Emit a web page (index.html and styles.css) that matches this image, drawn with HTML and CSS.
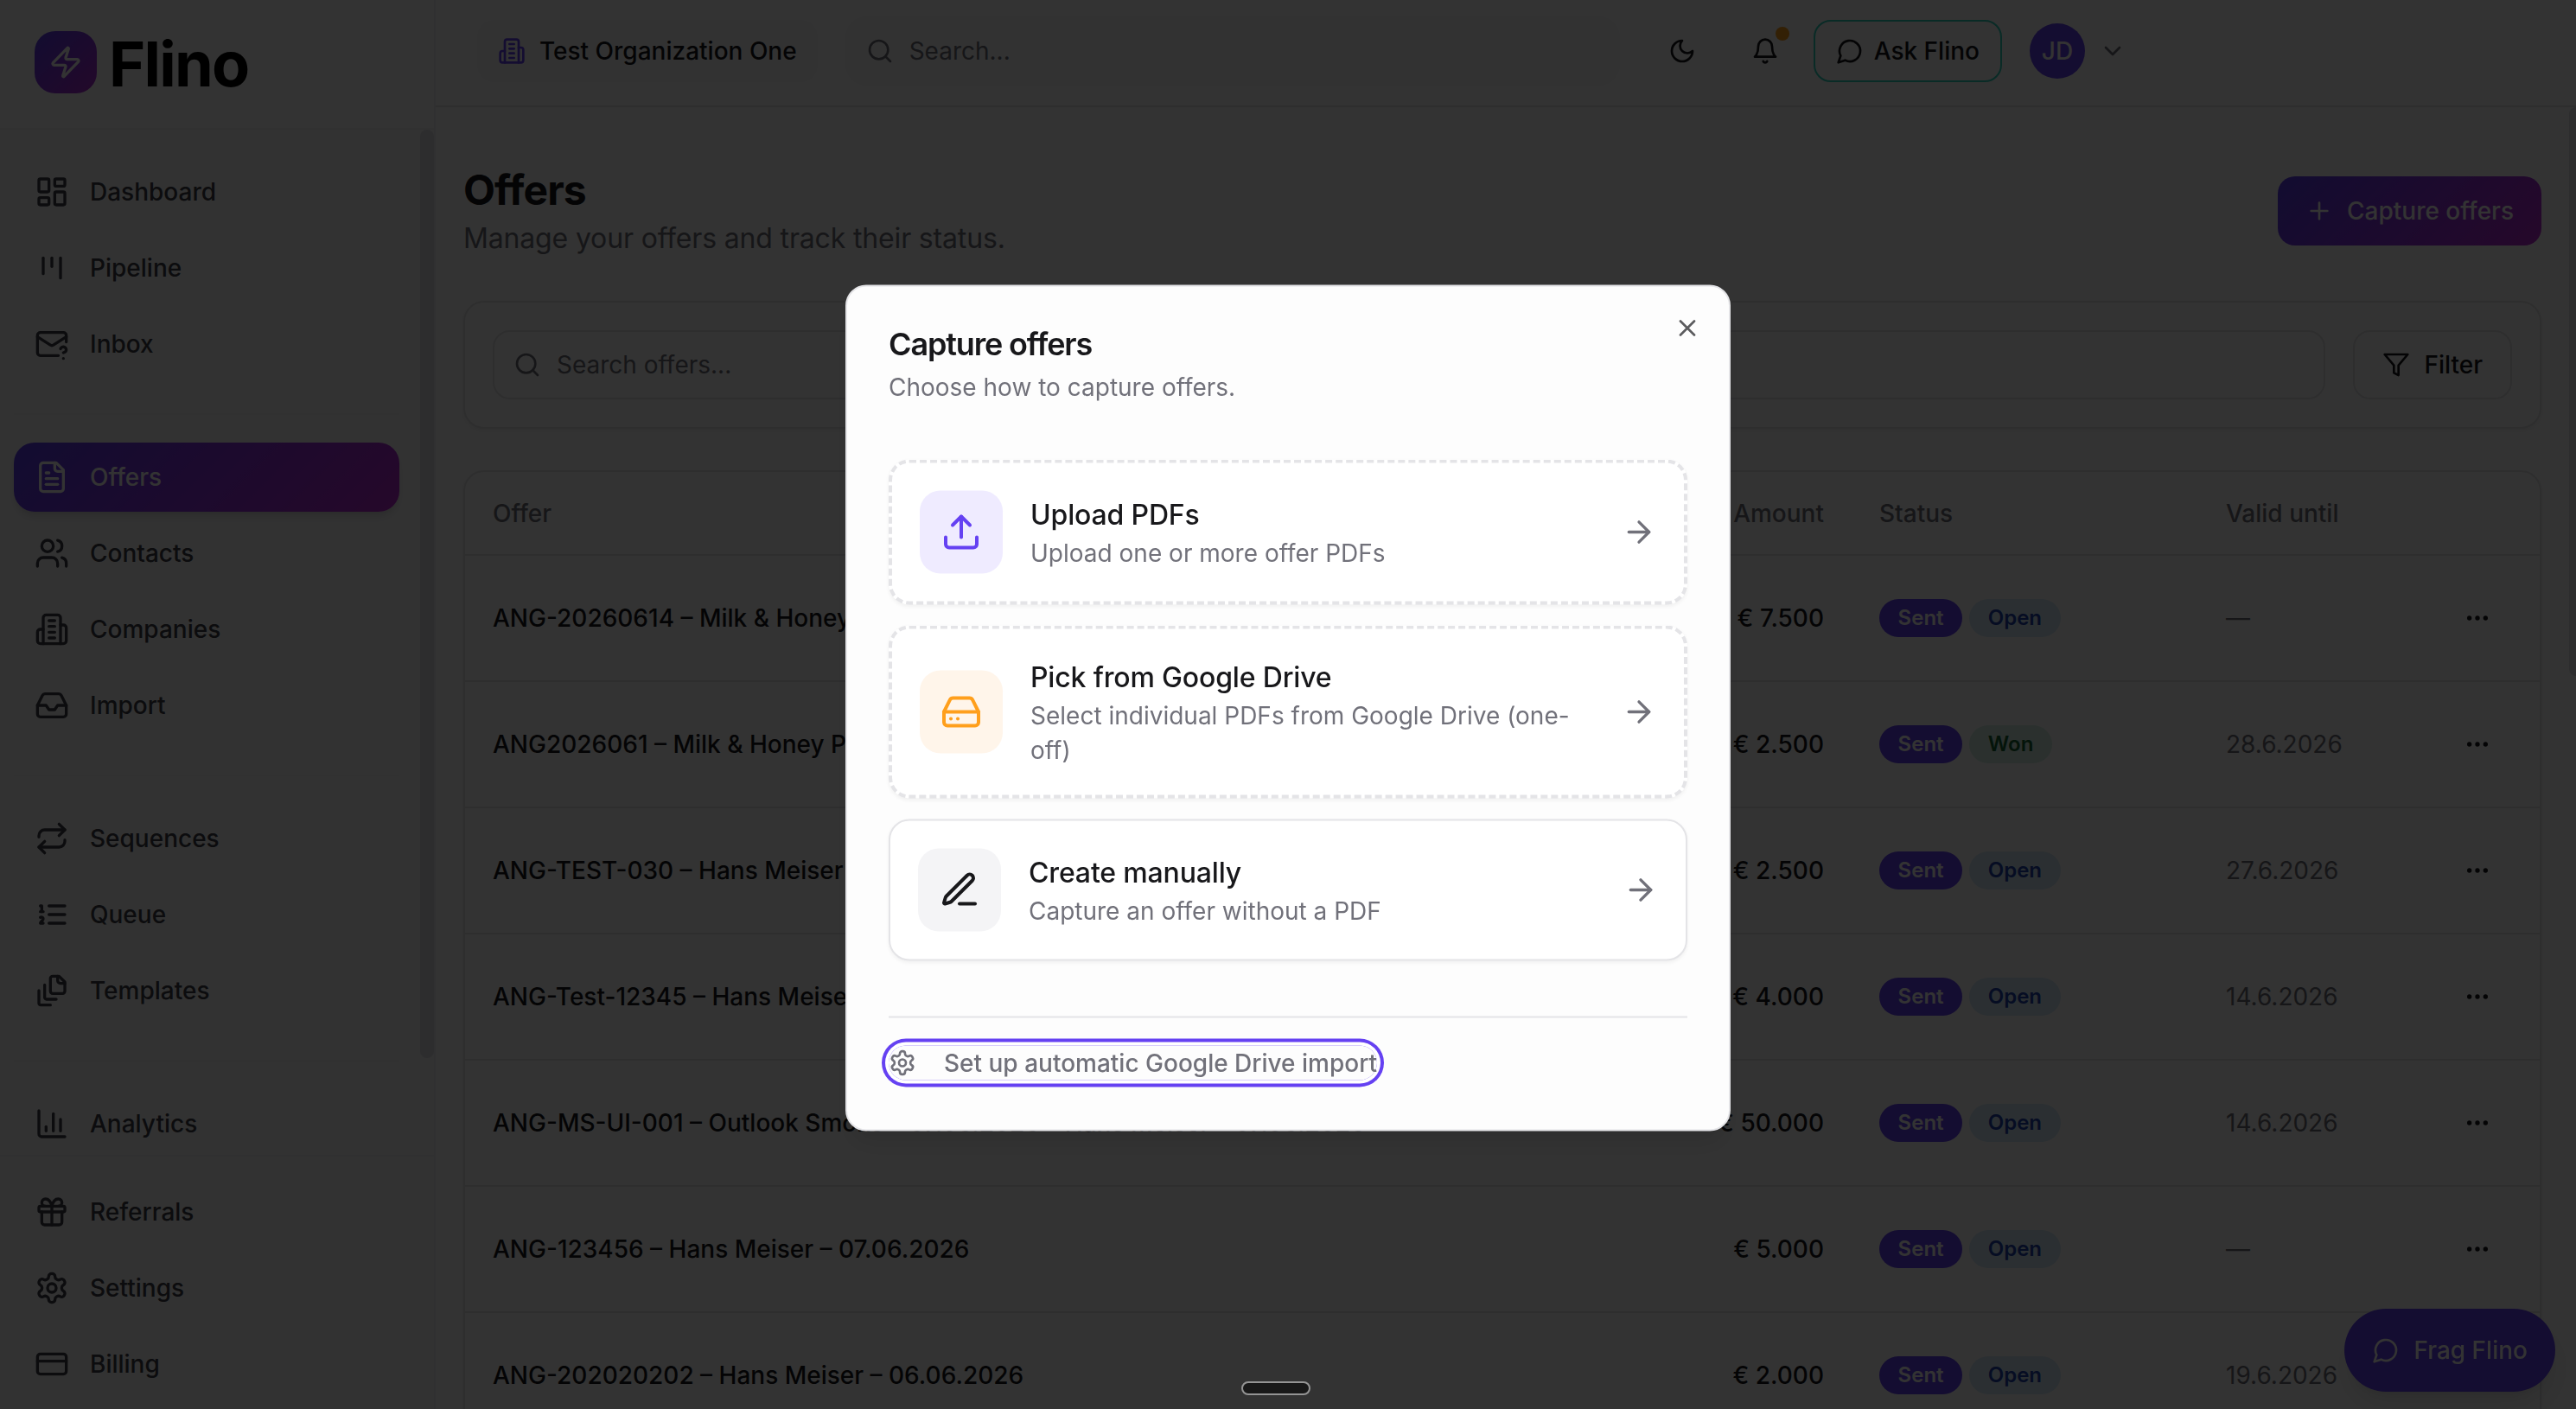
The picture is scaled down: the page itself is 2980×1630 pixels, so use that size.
FILE: index.html
```html
<!DOCTYPE html>
<html lang="en">
<head>
	<meta charset="UTF-8">
	<title>Flino – Offers</title>
	<link rel="stylesheet" href="styles.css">
</head>
<body>
	<!-- icon sprite -->
	<svg class="sprite" xmlns="http://www.w3.org/2000/svg">
		<symbol id="i-zap" viewBox="0 0 24 24"><path d="M4 14a1 1 0 0 1-.78-1.63l9.9-10.2a.5.5 0 0 1 .86.46l-1.92 6.02A1 1 0 0 0 13 10h7a1 1 0 0 1 .78 1.63l-9.9 10.2a.5.5 0 0 1-.86-.46l1.92-6.02A1 1 0 0 0 11 14z"/></symbol>
		<symbol id="i-dashboard" viewBox="0 0 24 24"><rect width="7" height="9" x="3" y="3" rx="1"/><rect width="7" height="5" x="14" y="3" rx="1"/><rect width="7" height="9" x="14" y="12" rx="1"/><rect width="7" height="5" x="3" y="16" rx="1"/></symbol>
		<symbol id="i-kanban" viewBox="0 0 24 24"><path d="M6 5v11"/><path d="M12 5v6"/><path d="M18 5v14"/></symbol>
		<symbol id="i-mail" viewBox="0 0 24 24"><path d="M22 10.5V6a2 2 0 0 0-2-2H4a2 2 0 0 0-2 2v12c0 1.1.9 2 2 2h12.5"/><path d="m22 7-8.97 5.7a1.94 1.94 0 0 1-2.06 0L2 7"/><path d="M18 15.28c.2-.4.5-.8.9-1a2.1 2.1 0 0 1 2.6.4c.3.4.5.8.5 1.3 0 1.3-2 2-2 2"/><path d="M20 22v.01"/></symbol>
		<symbol id="i-file" viewBox="0 0 24 24"><path d="M15 2H6a2 2 0 0 0-2 2v16a2 2 0 0 0 2 2h12a2 2 0 0 0 2-2V7Z"/><path d="M14 2v4a2 2 0 0 0 2 2h4"/><path d="M10 9H8"/><path d="M16 13H8"/><path d="M16 17H8"/></symbol>
		<symbol id="i-users" viewBox="0 0 24 24"><path d="M16 21v-2a4 4 0 0 0-4-4H6a4 4 0 0 0-4 4v2"/><circle cx="9" cy="7" r="4"/><path d="M22 21v-2a4 4 0 0 0-3-3.87"/><path d="M16 3.13a4 4 0 0 1 0 7.75"/></symbol>
		<symbol id="i-building" viewBox="0 0 24 24"><path d="M6 22V4a2 2 0 0 1 2-2h8a2 2 0 0 1 2 2v18Z"/><path d="M6 12H4a2 2 0 0 0-2 2v6a2 2 0 0 0 2 2h2"/><path d="M18 9h2a2 2 0 0 1 2 2v9a2 2 0 0 1-2 2h-2"/><path d="M10 6h4"/><path d="M10 10h4"/><path d="M10 14h4"/><path d="M10 18h4"/></symbol>
		<symbol id="i-inbox" viewBox="0 0 24 24"><path d="M22 12h-6l-2 3h-4l-2-3H2"/><path d="M5.45 5.11 2 12v6a2 2 0 0 0 2 2h16a2 2 0 0 0 2-2v-6l-3.45-6.89A2 2 0 0 0 16.76 4H7.24a2 2 0 0 0-1.79 1.11z"/></symbol>
		<symbol id="i-repeat" viewBox="0 0 24 24"><path d="m17 2 4 4-4 4"/><path d="M3 11v-1a4 4 0 0 1 4-4h14"/><path d="m7 22-4-4 4-4"/><path d="M21 13v1a4 4 0 0 1-4 4H3"/></symbol>
		<symbol id="i-list" viewBox="0 0 24 24"><path d="M10 12h11"/><path d="M10 18h11"/><path d="M10 6h11"/><path d="M4 10h2"/><path d="M4 6h1v4"/><path d="M6 18H4c0-1 2-2 2-3s-1-1.500-2-1"/></symbol>
		<symbol id="i-files" viewBox="0 0 24 24"><path d="M21 7h-3a2 2 0 0 1-2-2V2"/><path d="M21 6v6.500c0 .8-.7 1.500-1.500 1.500h-7c-.8 0-1.500-.7-1.500-1.500v-9c0-.8.7-1.500 1.500-1.500H17Z"/><path d="M7 8v8.800c0 .3.200.600.400.800.2.200.500.400.800.400H15"/><path d="M3 12v8.800c0 .3.200.600.400.800.2.200.500.400.800.400H11"/></symbol>
		<symbol id="i-chart" viewBox="0 0 24 24"><path d="M3 3v16a2 2 0 0 0 2 2h16"/><path d="M18 17V9"/><path d="M13 17V5"/><path d="M8 17v-3"/></symbol>
		<symbol id="i-gift" viewBox="0 0 24 24"><rect x="3" y="8" width="18" height="4" rx="1"/><path d="M12 8v13"/><path d="M19 12v7a2 2 0 0 1-2 2H7a2 2 0 0 1-2-2v-7"/><path d="M7.500 8a2.500 2.500 0 0 1 0-5A4.800 8 0 0 1 12 8a4.800 8 0 0 1 4.500-5 2.500 2.500 0 0 1 0 5"/></symbol>
		<symbol id="i-settings" viewBox="0 0 24 24"><path d="M12.220 2h-.44a2 2 0 0 0-2 2v.18a2 2 0 0 1-1 1.730l-.43.25a2 2 0 0 1-2 0l-.15-.08a2 2 0 0 0-2.730.73l-.22.38a2 2 0 0 0 .73 2.730l.15.1a2 2 0 0 1 1 1.720v.51a2 2 0 0 1-1 1.740l-.15.09a2 2 0 0 0-.73 2.730l.22.38a2 2 0 0 0 2.730.73l.15-.08a2 2 0 0 1 2 0l.43.25a2 2 0 0 1 1 1.730V20a2 2 0 0 0 2 2h.44a2 2 0 0 0 2-2v-.18a2 2 0 0 1 1-1.730l.43-.25a2 2 0 0 1 2 0l.15.08a2 2 0 0 0 2.730-.73l.22-.39a2 2 0 0 0-.73-2.730l-.15-.08a2 2 0 0 1-1-1.740v-.5a2 2 0 0 1 1-1.740l.15-.09a2 2 0 0 0 .73-2.730l-.22-.38a2 2 0 0 0-2.730-.73l-.15.08a2 2 0 0 1-2 0l-.43-.25a2 2 0 0 1-1-1.730V4a2 2 0 0 0-2-2z"/><circle cx="12" cy="12" r="3"/></symbol>
		<symbol id="i-card" viewBox="0 0 24 24"><rect width="20" height="14" x="2" y="5" rx="2"/><path d="M2 10h20"/></symbol>
		<symbol id="i-search" viewBox="0 0 24 24"><circle cx="11" cy="11" r="8"/><path d="m21 21-4.300-4.300"/></symbol>
		<symbol id="i-moon" viewBox="0 0 24 24"><path d="M12 3a6 6 0 0 0 9 9 9 9 0 1 1-9-9Z"/></symbol>
		<symbol id="i-bell" viewBox="0 0 24 24"><path d="M6 8a6 6 0 0 1 12 0c0 7 3 9 3 9H3s3-2 3-9"/><path d="M10.300 21a1.940 1.940 0 0 0 3.400 0"/></symbol>
		<symbol id="i-chat" viewBox="0 0 24 24"><path d="M7.900 20A9 9 0 1 0 4 16.100L2 22Z"/></symbol>
		<symbol id="i-chevron" viewBox="0 0 24 24"><path d="m6 9 6 6 6-6"/></symbol>
		<symbol id="i-plus" viewBox="0 0 24 24"><path d="M5 12h14"/><path d="M12 5v14"/></symbol>
		<symbol id="i-filter" viewBox="0 0 24 24"><path d="M22 3H2l8 9.460V19l4 2v-8.540L22 3z"/></symbol>
		<symbol id="i-dots" viewBox="0 0 24 24"><circle cx="12" cy="12" r="1"/><circle cx="19" cy="12" r="1"/><circle cx="5" cy="12" r="1"/></symbol>
		<symbol id="i-x" viewBox="0 0 24 24"><path d="M18 6 6 18"/><path d="m6 6 12 12"/></symbol>
		<symbol id="i-upload" viewBox="0 0 24 24"><path d="M21 15v4a2 2 0 0 1-2 2H5a2 2 0 0 1-2-2v-4"/><path d="m17 8-5-5-5 5"/><path d="M12 3v12"/></symbol>
		<symbol id="i-drive" viewBox="0 0 24 24"><path d="M22 12H2"/><path d="M5.450 5.110 2 12v6a2 2 0 0 0 2 2h16a2 2 0 0 0 2-2v-6l-3.450-6.890A2 2 0 0 0 16.760 4H7.240a2 2 0 0 0-1.790 1.110z"/><path d="M6 16h.01"/><path d="M10 16h.01"/></symbol>
		<symbol id="i-pen" viewBox="0 0 24 24"><path d="M12 20h9"/><path d="M16.376 3.622a1 1 0 0 1 3.002 3.002L7.368 18.635a2 2 0 0 1-.855.506l-2.872.838a.5.5 0 0 1-.62-.62l.838-2.872a2 2 0 0 1 .506-.854z"/></symbol>
		<symbol id="i-arrow" viewBox="0 0 24 24"><path d="M5 12h14"/><path d="m12 5 7 7-7 7"/></symbol>
	</svg>

	<div class="app">
		<aside class="sidebar">
			<div class="brand">
				<div class="brand-mark"><svg class="icon icon-40"><use href="#i-zap"/></svg></div>
				<span class="brand-name">Flino</span>
			</div>
			<nav class="nav">
				<div class="nav-scroll">
					<div class="nav-group">
						<a class="nav-item"><svg class="icon icon-40"><use href="#i-dashboard"/></svg>Dashboard</a>
						<a class="nav-item"><svg class="icon icon-40"><use href="#i-kanban"/></svg>Pipeline</a>
						<a class="nav-item"><svg class="icon icon-40"><use href="#i-mail"/></svg>Inbox</a>
					</div>
					<div class="nav-group">
						<a class="nav-item active"><svg class="icon icon-40"><use href="#i-file"/></svg>Offers</a>
						<a class="nav-item"><svg class="icon icon-40"><use href="#i-users"/></svg>Contacts</a>
						<a class="nav-item"><svg class="icon icon-40"><use href="#i-building"/></svg>Companies</a>
						<a class="nav-item"><svg class="icon icon-40"><use href="#i-inbox"/></svg>Import</a>
					</div>
					<div class="nav-group">
						<a class="nav-item"><svg class="icon icon-40"><use href="#i-repeat"/></svg>Sequences</a>
						<a class="nav-item"><svg class="icon icon-40"><use href="#i-list"/></svg>Queue</a>
						<a class="nav-item"><svg class="icon icon-40"><use href="#i-files"/></svg>Templates</a>
					</div>
					<div class="nav-group">
						<a class="nav-item"><svg class="icon icon-40"><use href="#i-chart"/></svg>Analytics</a>
					</div>
				</div>
				<div class="nav-thumb"></div>
			</nav>
			<div class="nav-footer">
				<a class="nav-item"><svg class="icon icon-40"><use href="#i-gift"/></svg>Referrals</a>
				<a class="nav-item"><svg class="icon icon-40"><use href="#i-settings"/></svg>Settings</a>
				<a class="nav-item"><svg class="icon icon-40"><use href="#i-card"/></svg>Billing</a>
			</div>
		</aside>

		<div class="page">
			<header class="topbar">
				<div class="org"><svg class="icon"><use href="#i-building"/></svg>Test Organization One</div>
				<div class="global-search"><svg class="icon"><use href="#i-search"/></svg>Search...</div>
				<div class="top-actions">
					<button class="icon-btn"><svg class="icon"><use href="#i-moon"/></svg></button>
					<button class="icon-btn"><svg class="icon"><use href="#i-bell"/></svg><span class="badge-dot"></span></button>
					<button class="ask"><svg class="icon"><use href="#i-chat"/></svg>Ask Flino</button>
					<div class="account"><span class="avatar">JD</span><svg class="icon"><use href="#i-chevron"/></svg></div>
				</div>
			</header>

			<div class="body">
				<main class="content">
					<div class="page-head">
						<div>
							<h1>Offers</h1>
							<p>Manage your offers and track their status.</p>
						</div>
						<button class="primary"><svg class="icon"><use href="#i-plus"/></svg>Capture offers</button>
					</div>

					<div class="card filters">
						<div class="search-field"><svg class="icon"><use href="#i-search"/></svg>Search offers...</div>
						<button class="filter-btn"><svg class="icon"><use href="#i-filter"/></svg>Filter</button>
					</div>

					<div class="card">
						<table class="offers">
							<colgroup><col><col class="c-amount"><col class="c-status"><col class="c-valid"><col class="c-menu"></colgroup>
							<thead>
								<tr><th>Offer</th><th class="num">Amount</th><th>Status</th><th>Valid until</th><th></th></tr>
							</thead>
							<tbody>
								<tr>
									<td>ANG-20260614 – Milk &amp; Honey Pictures – 14.06.2026</td><td class="num">€ 7.500</td>
									<td><span class="pill sent">Sent</span><span class="pill open">Open</span></td>
									<td class="muted">—</td><td class="menu"><svg class="icon"><use href="#i-dots"/></svg></td>
								</tr>
								<tr>
									<td>ANG2026061 – Milk &amp; Honey Pictures – 14.06.2026</td><td class="num">€ 2.500</td>
									<td><span class="pill sent">Sent</span><span class="pill won">Won</span></td>
									<td class="muted">28.6.2026</td><td class="menu"><svg class="icon"><use href="#i-dots"/></svg></td>
								</tr>
								<tr>
									<td>ANG-TEST-030 – Hans Meiser – 13.06.2026</td><td class="num">€ 2.500</td>
									<td><span class="pill sent">Sent</span><span class="pill open">Open</span></td>
									<td class="muted">27.6.2026</td><td class="menu"><svg class="icon"><use href="#i-dots"/></svg></td>
								</tr>
								<tr>
									<td>ANG-Test-12345 – Hans Meiser – 07.06.2026</td><td class="num">€ 4.000</td>
									<td><span class="pill sent">Sent</span><span class="pill open">Open</span></td>
									<td class="muted">14.6.2026</td><td class="menu"><svg class="icon"><use href="#i-dots"/></svg></td>
								</tr>
								<tr>
									<td>ANG-MS-UI-001 – Outlook Smoke – 07.06.2026 – Hans Meiser – 07.06.2026</td><td class="num">€ 50.000</td>
									<td><span class="pill sent">Sent</span><span class="pill open">Open</span></td>
									<td class="muted">14.6.2026</td><td class="menu"><svg class="icon"><use href="#i-dots"/></svg></td>
								</tr>
								<tr>
									<td>ANG-123456 – Hans Meiser – 07.06.2026</td><td class="num">€ 5.000</td>
									<td><span class="pill sent">Sent</span><span class="pill open">Open</span></td>
									<td class="muted">—</td><td class="menu"><svg class="icon"><use href="#i-dots"/></svg></td>
								</tr>
								<tr>
									<td>ANG-202020202 – Hans Meiser – 06.06.2026</td><td class="num">€ 2.000</td>
									<td><span class="pill sent">Sent</span><span class="pill open">Open</span></td>
									<td class="muted">19.6.2026</td><td class="menu"><svg class="icon"><use href="#i-dots"/></svg></td>
								</tr>
							</tbody>
						</table>
					</div>
				</main>
				<div class="page-thumb"></div>
			</div>
		</div>
	</div>

	<button class="fab"><svg class="icon"><use href="#i-chat"/></svg>Frag Flino</button>

	<div class="overlay"></div>

	<div class="modal">
		<svg class="icon modal-close"><use href="#i-x"/></svg>
		<h2>Capture offers</h2>
		<p class="modal-sub">Choose how to capture offers.</p>
		<div class="options">
			<div class="option dashed">
				<div class="tile tile-violet"><svg class="icon icon-48"><use href="#i-upload"/></svg></div>
				<div class="option-text"><h3>Upload PDFs</h3><p>Upload one or more offer PDFs</p></div>
				<svg class="icon icon-40 arrow"><use href="#i-arrow"/></svg>
			</div>
			<div class="option dashed">
				<div class="tile tile-orange"><svg class="icon icon-48"><use href="#i-drive"/></svg></div>
				<div class="option-text"><h3>Pick from Google Drive</h3><p>Select individual PDFs from Google Drive (one-off)</p></div>
				<svg class="icon icon-40 arrow"><use href="#i-arrow"/></svg>
			</div>
			<div class="option">
				<div class="tile"><svg class="icon icon-48"><use href="#i-pen"/></svg></div>
				<div class="option-text"><h3>Create manually</h3><p>Capture an offer without a PDF</p></div>
				<svg class="icon icon-40 arrow"><use href="#i-arrow"/></svg>
			</div>
		</div>
		<div class="modal-footer">
			<a class="setup-link"><svg class="icon"><use href="#i-settings"/></svg>Set up automatic Google Drive import</a>
		</div>
	</div>

	<div class="handle"></div>
</body>
</html>
```

FILE: styles.css
```css
* {
	margin: 0;
	padding: 0;
	box-sizing: border-box;
}
body {
	height: 100vh;
	overflow: hidden;
	background: #fdfdfd;
	color: #18181b;
	font-family: Inter, "Liberation Sans", sans-serif;
	font-size: 28px;
	line-height: 40px;
}
button {
	font: inherit;
	color: inherit;
	border: 0;
	background: none;
}
.sprite {
	display: none;
}
.icon {
	width: 32px;
	height: 32px;
	flex: none;
	display: block;
	fill: none;
	stroke: currentColor;
	stroke-width: 2;
	stroke-linecap: round;
	stroke-linejoin: round;
}
.icon-40 {
	width: 40px;
	height: 40px;
}
.icon-48 {
	width: 48px;
	height: 48px;
}
.app {
	display: flex;
	height: 100vh;
}

/* sidebar */
.sidebar {
	width: 504px;
	flex: none;
	display: flex;
	flex-direction: column;
	border-right: 2px solid #f0f0f2;
	background: #fafafb;
}
.brand {
	height: 150px;
	flex: none;
	display: flex;
	align-items: flex-start;
	gap: 14px;
	padding: 36px 40px 0;
	border-bottom: 2px solid #f2f2f4;
	background: #fdfdfd;
}
.brand-mark {
	width: 72px;
	height: 72px;
	display: flex;
	align-items: center;
	justify-content: center;
	border-radius: 24px;
	background: linear-gradient(135deg, #5b3ff0, #b02acf);
	color: #fdfdfd;
}
.brand-name {
	font-size: 72px;
	line-height: 76px;
	font-weight: 700;
	font-variation-settings: "opsz" 32;
	letter-spacing: -1.8px;
	color: #000;
}
.nav {
	flex: 1;
	min-height: 0;
	display: flex;
	overflow: hidden;
}
.nav-scroll {
	flex: 1;
	padding: 0 24px 0 16px;
}
.nav-thumb {
	width: 16px;
	height: 1074px;
	border-radius: 8px;
	background: #e0e0e4;
}
.nav-group {
	display: flex;
	flex-direction: column;
	gap: 8px;
	padding: 32px 0 40px;
	border-bottom: 2px solid #f2f2f4;
}
.nav-group:last-child {
	border-bottom: 0;
}
.nav-item {
	height: 80px;
	display: flex;
	align-items: center;
	gap: 24px;
	padding: 0 24px;
	border-radius: 24px;
	font-weight: 500;
	color: #3c3d45;
}
.nav-item.active {
	color: #fdfdfd;
	background: linear-gradient(135deg, #5b3ff0, #bb28d0);
	box-shadow: 0 8px 12px -2px rgba(0, 0, 0, .1), 0 4px 8px -4px rgba(0, 0, 0, .1);
}
.nav-footer {
	height: 294px;
	flex: none;
	display: flex;
	flex-direction: column;
	gap: 8px;
	padding: 24px 40px 0 16px;
	border-top: 2px solid #f0f0f2;
}

/* top bar */
.page {
	flex: 1;
	min-width: 0;
	display: flex;
	flex-direction: column;
}
.topbar {
	height: 124px;
	flex: none;
	display: flex;
	align-items: center;
	padding: 0 48px 4px;
	border-bottom: 2px solid #e4e4e7;
}
.org {
	height: 72px;
	display: flex;
	align-items: center;
	gap: 16px;
	padding: 0 24px;
	border-radius: 20px;
	background: #fafafb;
	font-weight: 500;
}
.org .icon {
	color: #6541f2;
}
.global-search {
	width: 896px;
	height: 80px;
	display: flex;
	align-items: center;
	gap: 18px;
	margin-left: 32px;
	padding: 0 24px;
	border-radius: 24px;
	background: #fafafb;
	color: #71717a;
}
.top-actions {
	display: flex;
	align-items: center;
	gap: 16px;
	margin-left: 32px;
}
.icon-btn {
	position: relative;
	width: 80px;
	height: 80px;
	display: flex;
	align-items: center;
	justify-content: center;
}
.badge-dot {
	position: absolute;
	top: 12px;
	right: 12px;
	width: 16px;
	height: 16px;
	border-radius: 50%;
	background: #ff9f1c;
}
.ask {
	height: 72px;
	display: flex;
	align-items: center;
	gap: 12px;
	padding: 0 24px;
	border: 2px solid #2dd4bf;
	border-radius: 20px;
	font-weight: 500;
}
.account {
	display: flex;
	align-items: center;
	gap: 16px;
	padding-left: 16px;
	color: #71717a;
}
.avatar {
	width: 64px;
	height: 64px;
	border-radius: 50%;
	background: #6541f2;
	color: #fdfdfd;
	font-weight: 500;
	line-height: 64px;
	text-align: center;
}

/* offers page */
.body {
	flex: 1;
	min-height: 0;
	display: flex;
	overflow: hidden;
}
.page-thumb {
	width: 8px;
	height: 658px;
	border-radius: 8px 0 0 8px;
	background: #e0e0e4;
}
.content {
	flex: 1;
	padding: 64px 32px 0;
}
.page-head {
	height: 160px;
	display: flex;
	align-items: flex-start;
	justify-content: space-between;
}
.page-head h1 {
	font-size: 48px;
	line-height: 64px;
	font-weight: 700;
	letter-spacing: -.9px;
}
.page-head p {
	font-size: 32px;
	line-height: 48px;
	letter-spacing: -.16px;
	color: #71717a;
}
.primary {
	height: 80px;
	display: flex;
	align-items: center;
	gap: 16px;
	margin-top: 16px;
	padding: 0 32px;
	border-radius: 20px;
	background: linear-gradient(135deg, #5b3ff0, #bb28d0);
	color: #fdfdfd;
	font-weight: 500;
}
.card {
	border: 2px solid #e4e4e7;
	border-radius: 24px;
	background: #fff;
	box-shadow: 0 2px 4px rgba(0, 0, 0, .05);
}
.filters {
	display: flex;
	gap: 32px;
	padding: 32px;
	margin-bottom: 48px;
}
.search-field {
	flex: 1;
	height: 80px;
	display: flex;
	align-items: center;
	gap: 18px;
	padding: 0 22px;
	border: 2px solid #e4e4e7;
	border-radius: 20px;
	color: #71717a;
}
.filter-btn {
	height: 80px;
	display: flex;
	align-items: center;
	gap: 16px;
	padding: 0 32px;
	border: 2px solid #e4e4e7;
	border-radius: 20px;
	font-weight: 500;
}
.offers {
	width: 100%;
	table-layout: fixed;
	border-spacing: 0;
}
.c-amount {
	width: 300px;
}
.c-status {
	width: 401px;
}
.c-valid {
	width: 251px;
}
.c-menu {
	width: 144px;
}
.offers th,
.offers td {
	padding: 0 32px;
	border-bottom: 2px solid #e4e4e7;
	text-align: left;
	vertical-align: middle;
	white-space: nowrap;
	font-weight: 500;
}
.offers th {
	height: 97px;
	color: #71717a;
}
.offers td {
	height: 146px;
}
.offers .num {
	text-align: right;
}
.offers .muted {
	font-weight: 400;
	color: #71717a;
}
.offers .menu .icon {
	margin-left: 24px;
}
.pill {
	display: inline-block;
	height: 44px;
	margin-right: 8px;
	padding: 0 21.6px;
	border-radius: 22px;
	font-size: 24px;
	line-height: 44px;
	font-weight: 600;
	vertical-align: middle;
}
.sent {
	background: #6541f2;
	color: #fdfdfd;
}
.open {
	background: #d6ebf8;
	color: #1e40af;
}
.won {
	background: #d4f1e4;
	color: #166534;
}
.fab {
	position: fixed;
	right: 24px;
	bottom: 20px;
	height: 96px;
	display: flex;
	align-items: center;
	gap: 16px;
	padding: 0 32px;
	border-radius: 48px;
	background: #6541f2;
	color: #fdfdfd;
	font-weight: 500;
	box-shadow: 0 20px 30px -6px rgba(0, 0, 0, .1), 0 8px 12px -8px rgba(0, 0, 0, .1);
}

/* dialog */
.overlay {
	position: fixed;
	inset: 0;
	background: rgba(0, 0, 0, .8);
}
.modal {
	position: fixed;
	top: 819px;
	left: 50%;
	width: 1024px;
	height: 979px;
	padding: 48px;
	transform: translate(-50%, -50%);
	border: 2px solid #e4e4e7;
	border-radius: 24px;
	background: #fdfdfd;
	box-shadow: 0 20px 30px -6px rgba(0, 0, 0, .1), 0 8px 12px -8px rgba(0, 0, 0, .1);
}
.modal-close {
	position: absolute;
	top: 32px;
	right: 32px;
	opacity: .7;
}
.modal h2 {
	font-size: 36px;
	line-height: 36px;
	font-weight: 600;
	letter-spacing: -1.15px;
}
.modal-sub {
	margin-top: 12px;
	color: #71717a;
}
.options {
	display: flex;
	flex-direction: column;
	gap: 24px;
	margin-top: 64px;
}
.option {
	display: flex;
	align-items: center;
	gap: 32px;
	padding: 32px;
	border: 2px solid #e4e4e7;
	border-radius: 24px;
	background: #fff;
	box-shadow: 0 2px 4px rgba(0, 0, 0, .05);
}
.option.dashed {
	border: 4px dashed #e4e4e7;
}
.tile {
	width: 96px;
	height: 96px;
	flex: none;
	display: flex;
	align-items: center;
	justify-content: center;
	border-radius: 24px;
	background: #f4f4f6;
}
.tile-violet {
	background: #efebff;
	color: #6541f2;
}
.tile-orange {
	background: #fff5ea;
	color: #ff9f1c;
}
.option-text {
	flex: 1;
}
.option h3 {
	font-size: 32px;
	line-height: 48px;
	font-weight: 500;
	letter-spacing: -.16px;
}
.option p,
.arrow {
	color: #71717a;
}
.modal-footer {
	display: flex;
	margin-top: 64px;
	padding-top: 32px;
	border-top: 2px solid #e4e4e7;
}
.setup-link {
	height: 40px;
	display: flex;
	align-items: center;
	gap: 32px;
	border-radius: 20px;
	font-weight: 500;
	color: #71717a;
	box-shadow: 0 0 0 4px #fff, 0 0 0 8px #6541f2;
}
.handle {
	position: fixed;
	left: 1436px;
	bottom: 16px;
	width: 80px;
	height: 16px;
	border: 2px solid #949494;
	border-radius: 8px;
	background: #191919;
}
```
